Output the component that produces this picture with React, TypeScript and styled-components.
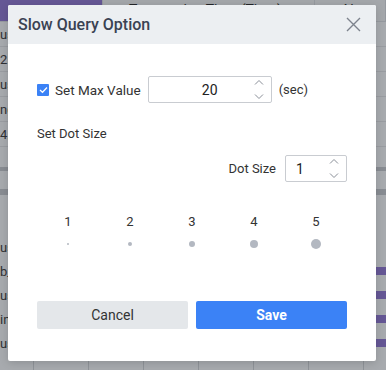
import React from 'react'
import styled, { createGlobalStyle } from 'styled-components'

const GlobalStyle = createGlobalStyle`
  html, body {
    margin: 0;
    padding: 0;
    width: 386px;
    height: 370px;
    overflow: hidden;
    font-family: Roboto, "Noto Sans", "Liberation Sans", sans-serif;
  }
  * { box-sizing: border-box; }
`

const Page = styled.div`
  position: relative;
  width: 386px;
  height: 370px;
  background: #f6f7f9;
  overflow: hidden;
`

const TableHead = styled.div`
  display: flex;
  height: 22px;
  border-bottom: 1px solid #d9dce0;
  font-size: 14px;
  color: #222;
`

const HeadCell = styled.div<{ $w: number; $purple?: boolean }>`
  width: ${({ $w }) => $w}px;
  flex-shrink: 0;
  background: ${({ $purple }) => ($purple ? '#8b72d0' : '#f1f2f4')};
  border-right: 1px solid #d9dce0;
  padding: 2px 0 0 26px;
  white-space: nowrap;
  overflow: hidden;
`

const TableRow = styled.div`
  height: 25px;
  display: flex;
  align-items: center;
  border-bottom: 1px solid #dfe1e4;
  font-size: 13px;
  color: #333;
`

const Band = styled.div`
  height: 28px;
  border-top: 4px solid #c4c7cc;
  border-bottom: 6px solid #c4c7cc;
  margin-top: 20px;
`

const ChartRows = styled.div`
  display: flex;
  flex-direction: column;
  margin-top: 40px;
`

const ChartRow = styled.div`
  height: 24px;
  display: flex;
  align-items: center;
  justify-content: space-between;
  font-size: 13px;
  color: #333;
`

const PurpleTick = styled.span`
  width: 10px;
  height: 8px;
  background: #8b72d0;
`

const Grid = styled.div`
  height: 40px;
  background-image: repeating-linear-gradient(
    to right,
    transparent 0,
    transparent 33px,
    #cfd2d6 33px,
    #cfd2d6 34px,
    transparent 34px,
    transparent 55px
  );
`

const Overlay = styled.div`
  position: absolute;
  inset: 0;
  background: rgba(40, 44, 52, 0.38);
`

const Modal = styled.div`
  position: absolute;
  left: 8px;
  top: 5px;
  width: 368px;
  height: 356px;
  background: #fff;
  border-radius: 2px;
  display: flex;
  flex-direction: column;
  box-shadow: 0 2px 8px rgba(0, 0, 0, 0.15);
`

const Header = styled.div`
  height: 39px;
  background: #eceff2;
  display: flex;
  align-items: center;
  justify-content: space-between;
  padding: 0 15px 0 10px;
  border-radius: 2px 2px 0 0;
`

const Title = styled.div`
  font-size: 16px;
  font-weight: 500;
  color: #3a4252;
`

const CloseButton = styled.button`
  border: 0;
  background: none;
  padding: 0;
  display: flex;
  cursor: pointer;
`

const Body = styled.div`
  padding: 32px 29px 0 29px;
  display: flex;
  flex-direction: column;
`

const MaxRow = styled.div`
  display: flex;
  align-items: center;
  height: 27px;
`

const Check = styled.span`
  width: 12px;
  height: 12px;
  background: #3b82f6;
  border-radius: 1px;
  display: flex;
  align-items: center;
  justify-content: center;
  margin-right: 6px;
`

const Label = styled.span`
  font-size: 13.5px;
  color: #333;
  margin-right: 7px;
`

const NumberBox = styled.div<{ $w: number; $align: 'center' | 'left' }>`
  width: ${({ $w }) => $w}px;
  height: 27px;
  border: 1px solid #c9ccd1;
  border-radius: 2px;
  display: flex;
  align-items: center;
  position: relative;
  padding: ${({ $align }) => ($align === 'left' ? '0 0 0 10px' : '0')};
  font-size: 14px;
  color: #222;
`

const NumberValue = styled.span<{ $align: 'center' | 'left' }>`
  flex: 1;
  text-align: ${({ $align }) => $align};
`

const Spinner = styled.div`
  position: absolute;
  right: 6px;
  top: 2px;
  bottom: 2px;
  width: 12px;
  display: flex;
  flex-direction: column;
  justify-content: space-between;
  align-items: center;
`

const Unit = styled.span`
  font-size: 13px;
  color: #333;
  margin-left: 7px;
`

const SubTitle = styled.div`
  font-size: 13px;
  color: #333;
  margin-top: 23px;
`

const DotSizeRow = styled.div`
  display: flex;
  justify-content: flex-end;
  align-items: center;
  margin-top: 14px;
`

const DotSizeLabel = styled.span`
  font-size: 13px;
  color: #333;
  margin-right: 9px;
`

const Scale = styled.div`
  display: grid;
  grid-template-columns: repeat(5, 1fr);
  margin-top: 32px;
`

const ScaleItem = styled.div`
  display: flex;
  flex-direction: column;
  align-items: center;
  height: 38px;
`

const ScaleNum = styled.span`
  font-size: 13px;
  color: #333;
  height: 16px;
  line-height: 16px;
`

const DotSlot = styled.div`
  height: 20px;
  display: flex;
  align-items: center;
  justify-content: center;
  margin-top: 5px;
`

const Dot = styled.span<{ $size: number }>`
  width: ${({ $size }) => $size}px;
  height: ${({ $size }) => $size}px;
  border-radius: 50%;
  background: #b3b8c1;
`

const Buttons = styled.div`
  display: grid;
  grid-template-columns: 1fr 1fr;
  gap: 8px;
  margin-top: 49px;
`

const Button = styled.button<{ $primary?: boolean }>`
  height: 28px;
  border: 0;
  border-radius: 2px;
  font-family: inherit;
  font-size: 14px;
  font-weight: ${({ $primary }) => ($primary ? 700 : 400)};
  background: ${({ $primary }) => ($primary ? '#3b82f6' : '#e4e7ea')};
  color: ${({ $primary }) => ($primary ? '#fff' : '#333')};
  cursor: pointer;
`

const Chevrons = () => (
  <Spinner>
    <svg width="10" height="7" viewBox="0 0 10 7">
      <path d="M1 5.5 L5 1.5 L9 5.5" fill="none" stroke="#8a8f98" strokeWidth="1" />
    </svg>
    <svg width="10" height="7" viewBox="0 0 10 7">
      <path d="M1 1.5 L5 5.5 L9 1.5" fill="none" stroke="#8a8f98" strokeWidth="1" />
    </svg>
  </Spinner>
)

const leftTexts = ['us', '2.1', 'us', 'ng', '4.7']
const chartTexts = ['us', 'b_', 'us', 'in', 'us']

export default function App() {
  return (
    <Page>
      <GlobalStyle />
      <TableHead>
        <HeadCell $w={103} $purple />
        <HeadCell $w={212}>Transaction Time (Time)</HeadCell>
        <HeadCell $w={71}>Alert</HeadCell>
      </TableHead>
      {leftTexts.map((t, i) => (
        <TableRow key={i}>{t}</TableRow>
      ))}
      <Band />
      <ChartRows>
        {chartTexts.map((t, i) => (
          <ChartRow key={i}>
            <span>{t}</span>
            {i > 0 && <PurpleTick />}
          </ChartRow>
        ))}
      </ChartRows>
      <Grid />
      <Overlay />
      <Modal>
        <Header>
          <Title>Slow Query Option</Title>
          <CloseButton>
            <svg width="15" height="15" viewBox="0 0 15 15">
              <path d="M1 1 L14 14 M14 1 L1 14" stroke="#7d838d" strokeWidth="1.4" />
            </svg>
          </CloseButton>
        </Header>
        <Body>
          <MaxRow>
            <Check>
              <svg width="9" height="8" viewBox="0 0 9 8">
                <path d="M1 4 L3.5 6.3 L8 1.5" fill="none" stroke="#fff" strokeWidth="1.3" />
              </svg>
            </Check>
            <Label>Set Max Value</Label>
            <NumberBox $w={124} $align="center">
              <NumberValue $align="center">20</NumberValue>
              <Chevrons />
            </NumberBox>
            <Unit>(sec)</Unit>
          </MaxRow>
          <SubTitle>Set Dot Size</SubTitle>
          <DotSizeRow>
            <DotSizeLabel>Dot Size</DotSizeLabel>
            <NumberBox $w={62} $align="left">
              <NumberValue $align="left">1</NumberValue>
              <Chevrons />
            </NumberBox>
          </DotSizeRow>
          <Scale>
            {[1, 2, 3, 4, 5].map((n) => (
              <ScaleItem key={n}>
                <ScaleNum>{n}</ScaleNum>
                <DotSlot>
                  <Dot $size={n * 2} />
                </DotSlot>
              </ScaleItem>
            ))}
          </Scale>
          <Buttons>
            <Button>Cancel</Button>
            <Button $primary>Save</Button>
          </Buttons>
        </Body>
      </Modal>
    </Page>
  )
}
